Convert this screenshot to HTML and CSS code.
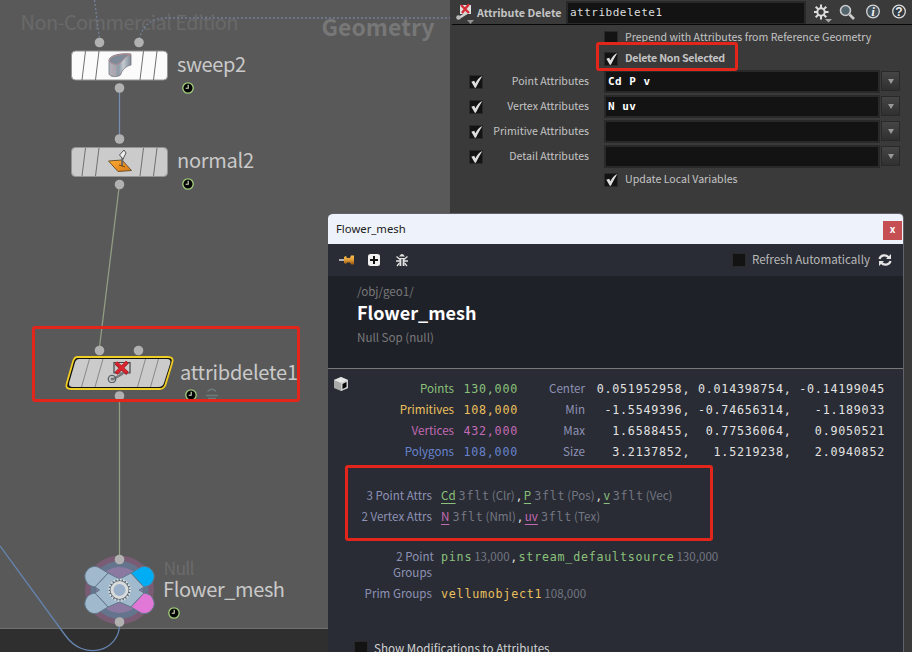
FILE: index.html
```html
<!DOCTYPE html>
<html lang="en">
<head>
<meta charset="utf-8">
<title>Flower_mesh</title>
<link rel="stylesheet" href="styles.css">
</head>
<body>
<svg class="defs" width="0" height="0">
  <defs>
    <linearGradient id="orange" x1="0" y1="0" x2="1" y2="1"><stop offset="0" stop-color="#ffad35"/><stop offset="1" stop-color="#d87813"/></linearGradient>
    <linearGradient id="steel"><stop offset="0" stop-color="#aeb7c0"/><stop offset=".45" stop-color="#8e9ba7"/><stop offset=".65" stop-color="#c3cbd1"/><stop offset="1" stop-color="#7e8a96"/></linearGradient>
    <linearGradient id="gold" x1="0" y1="0" x2="0" y2="1"><stop offset="0" stop-color="#ffc14b"/><stop offset=".5" stop-color="#e09a35"/><stop offset="1" stop-color="#935512"/></linearGradient>
    <symbol id="tick" viewBox="0 0 14 14"><path d="M2.300 6.800 5.200 5.800 6.400 8.300C8 5 10 2.500 13.300 1 11.200 4.500 9.100 8 6.900 12.700H5.800Z" fill="#dedede"/></symbol>
    <symbol id="clock" viewBox="0 0 12 12"><circle cx="6" cy="6" r="5.200" fill="#050505" stroke="#a3cf7b" stroke-width="1.300"/><path d="M6.200 2.800V6.200H3.700" fill="none" stroke="#d8e8ca" stroke-width="1.100"/></symbol>
    <symbol id="attrdel" viewBox="0 0 24 22"><path d="M7 1.500H23V12H7Z" fill="none" stroke="#444" stroke-width="1.200"/><path d="M5.500 18.500 16 12.500" stroke="#777" stroke-width="2.200"/><circle cx="5" cy="18" r="3.700" fill="none" stroke="#59636a" stroke-width="1.300"/><circle cx="5" cy="18" r="1.500" fill="#777"/><path d="M9 2 20.500 12.500M20.500 1 9 12.500" stroke="#8f1820" stroke-width="3.800"/><path d="M9 1.500 20 12M20 1 9.500 12" stroke="#dc2430" stroke-width="2.800"/></symbol>
  </defs>
</svg>
<main class="desktop">
  <section class="network">
    <svg class="canvas" width="450" height="652" viewBox="0 0 450 652">
      <rect y="629" width="450" height="23" fill="#2f2f2f"/>
      <path d="M0 628.500H328" stroke="#6d706d"/>
      <g fill="#696969" class="ui">
        <text x="20.500" y="30" font-size="20" textLength="218">Non-Commercial Edition</text>
        <text x="321.500" y="36" font-size="23" font-weight="700" fill="#777" textLength="113">Geometry</text>
      </g>
      <g fill="none" stroke="#72809a" stroke-width="1.300">
        <path d="M94.500 0 99.500 39M139 39Q145 18 166 18H450" stroke-dasharray="2 2"/>
        <path d="M119.500 92V138" stroke="#7690b2"/>
        <path d="M119 188 99.500 347M119.500 398V556" stroke="#919c83"/>
        <path d="M0 546 65 635C84 662 119 651 119.500 625" stroke="#6583ae"/>
      </g>
      <g class="node">
        <rect x="71.500" y="51" width="96" height="29" rx="4" fill="#fbfbfb" stroke="#939393"/>
        <path d="M85.500 51 82 80M99 51 95.500 80M143.500 51 140 80M157 51 153.500 80" stroke="#707070"/>
        <path d="M109 60C110 54 125 53 131 54V65C126 66 122 70 120.500 75 117 77.500 110 77 109 74Z" fill="url(#steel)" stroke="#77767e" stroke-width=".8"/>
        <path d="M109.500 60C111 55 125 53 131 54.500 122 57 123 64 116 64.500 112 64 109 62 109.500 60Z" fill="#7f8b98" stroke="#b38a92"/>
        <path d="M112 65V75M115 66V76" stroke="#c6a3aa"/>
      </g>
      <g class="node">
        <rect x="71.500" y="147.500" width="96" height="29" rx="4" fill="#cbcbcb" stroke="#949494"/>
        <path d="M85.500 148 82 176M99 148 95.500 176M143.500 148 140 176M157 148 153.500 176" stroke="#707070"/>
        <path d="M108.500 161 122 160 131.500 170.500 118 171.500Z" fill="url(#orange)" stroke="#6f542e"/>
        <path d="M122 166 122.500 157" stroke="#666" stroke-width="2"/><path d="M124 150 126 153 123 159 119.500 155Z" fill="#eee" stroke="#555"/>
        <path d="M119 165 125 167" stroke="#7a480c"/>
      </g>
      <g class="node">
        <path d="M77.500 357H168Q174 357 172.300 362.500L165.500 384.500Q164 389 159.500 389H71Q65 389 66.700 383.500L73 361.500Q74.300 357 77.500 357Z" fill="#111" stroke="#f0cd22" stroke-width="1.800"/>
        <path d="M79 359H167Q171.500 359 170.200 363.500L164 383Q162.800 387 158.500 387H73Q68 387 69.200 382.500L75 362.500Q76 359 79 359Z" fill="#cbcbcb"/>
        <path d="M89.500 359 81.500 387M103 359 95 387M145.500 359 137.500 387M158.500 359 150.500 387" stroke="#888"/>
        <use href="#attrdel" x="107" y="361" width="24" height="22"/>
      </g>
      <g>
        <circle cx="119.500" cy="590" r="34.500" fill="#795c73"/><circle cx="119.500" cy="590" r="29" fill="#65748d"/><circle cx="119.500" cy="590" r="23" fill="#8b79a2"/>
        <g fill="#a0b9cc" stroke="#62788a">
          <path d="M108 573 119.500 579 131 573 144 587 139 590 144 593 131 607 119.500 602 108 607 95 593 99.500 590 95 587Z"/>
          <path d="M108 573 98 567A10 10 0 0 0 86 581Q88 586 95 587Z"/>
          <path d="M108 607 98 613A10 10 0 0 1 86 599Q88 594 95 593Z"/>
          <path d="M131 573 141 567A10 10 0 0 1 153 581Q151 586 144 587Z" fill="#00adf5"/>
          <path d="M131 607 141 613A10 10 0 0 0 153 599Q151 594 144 593Z" fill="#e178d8"/>
        </g>
        <circle cx="119.500" cy="590" r="10.800" fill="#536474"/><circle cx="119.500" cy="590" r="10.500" fill="none" stroke="#d3d9dc" stroke-width="2" stroke-dasharray="2 1.300"/><circle cx="119.500" cy="590" r="7.500" fill="#9ab0cb" stroke="#dadcdb" stroke-width="3"/>
      </g>
      <g fill="#b1b1b1"><circle cx="99.500" cy="42.500" r="4.800"/><circle cx="139" cy="42.500" r="4.800"/><circle cx="119.500" cy="88" r="4.800"/><circle cx="119.500" cy="139" r="4.800"/><circle cx="119.500" cy="184.500" r="4.800"/><circle cx="99.500" cy="350.500" r="4.800"/><circle cx="138.500" cy="350.500" r="4.800"/><circle cx="119.500" cy="396" r="4.800"/><circle cx="119.500" cy="559.500" r="4.800"/><circle cx="119.500" cy="622" r="4.800"/></g>
      <g class="ui" font-size="20" fill="#c9c9c9">
        <text x="177" y="72" textLength="69">sweep2</text>
        <text x="177" y="168" textLength="77">normal2</text>
        <text x="180" y="380" textLength="118">attribdelete1</text>
        <text x="163.500" y="575" font-size="17.500" fill="#6b6b6b" textLength="31">Null</text>
        <text x="163" y="597" textLength="122">Flower_mesh</text>
      </g>
      <use href="#clock" x="182" y="82" width="12" height="12"/><use href="#clock" x="182" y="178" width="12" height="12"/><use href="#clock" x="185" y="389" width="12" height="12"/><use href="#clock" x="168" y="607" width="12" height="12"/>
      <path d="M207.500 391.500Q212 387 216 391.500M206 395.500H218M208 398.500H216" fill="none" stroke="#6c7c7c" stroke-width="1.300"/>
    </svg>
  </section>
  <section class="params">
    <header class="params-head">
      <svg class="op-icon" width="20" height="22" viewBox="0 0 20 22"><path d="M4 1H15V10H4Z" fill="#dedede"/><path d="M3 14 11 9" stroke="#d2d2d2" stroke-width="2.200"/><circle cx="2.500" cy="13.500" r="2.300" fill="#bbb"/><path d="M5 1 13 9M13 0 6 9" stroke="#d32c35" stroke-width="2.400"/><path d="M11 16H18L14.500 20Z" fill="#939393"/></svg>
      <b class="op-name">Attribute Delete</b>
      <span class="name-field">attribdelete1</span>
      <svg class="head-icons" width="98" height="24" viewBox="0 0 98 24" fill="none">
        <g stroke="#ddd"><circle cx="7" cy="12" r="3.700" stroke-width="2"/><path d="M7 4.500V8M7 16V19.500M-.5 12H3M11 12H14.500M1.700 6.700 4.300 9.300M9.700 14.700 12.300 17.300M12.300 6.700 9.700 9.300M4.300 14.700 1.700 17.300" stroke-width="2"/></g>
        <path d="M11 19H18L14.500 22.500Z" fill="#aaa"/>
        <circle cx="31.500" cy="10.500" r="5" fill="#53656d" stroke="#ccc" stroke-width="1.600"/><path d="M35.500 14.500 40 19" stroke="#ccc" stroke-width="2.600"/>
        <circle cx="59" cy="11.500" r="6.300" fill="#43515b" stroke="#d5d5d5" stroke-width="1.300"/><circle cx="85" cy="11.500" r="6.300" fill="#323a40" stroke="#ddd" stroke-width="1.300"/>
        <text class="glyph serif" x="59" y="16" font-size="13">i</text><text class="glyph" x="85" y="16" font-size="12">?</text>
      </svg>
    </header>
    <div class="opt prepend"><i class="box"></i><span>Prepend with Attributes from Reference Geometry</span></div>
    <div class="opt delete"><i class="box"><svg><use href="#tick"/></svg></i><b>Delete Non Selected</b></div>
    <div class="fields">
      <div class="field"><i class="box"><svg><use href="#tick"/></svg></i><label>Point Attributes</label><span class="input">Cd P v</span><span class="drop"></span></div>
      <div class="field"><i class="box"><svg><use href="#tick"/></svg></i><label>Vertex Attributes</label><span class="input">N uv</span><span class="drop"></span></div>
      <div class="field"><i class="box"><svg><use href="#tick"/></svg></i><label>Primitive Attributes</label><span class="input"></span><span class="drop"></span></div>
      <div class="field"><i class="box"><svg><use href="#tick"/></svg></i><label>Detail Attributes</label><span class="input"></span><span class="drop"></span></div>
    </div>
    <div class="opt update"><i class="box"><svg><use href="#tick"/></svg></i><span>Update Local Variables</span></div>
  </section>
  <section class="info">
    <header class="titlebar"><span>Flower_mesh</span><span class="close">x</span></header>
    <div class="toolbar">
      <svg width="74" height="16" viewBox="0 0 74 16"><path d="M0 8H7" stroke="#ddd" stroke-width="1.500"/><path d="M5 5 7 4 8 6H11L12 3.500H15V12.500H12L11 10.500H8L7 12 5 11Z" fill="url(#gold)"/><rect x="29" y="2" width="12" height="12" rx="2.500" fill="#f0f0f0"/><path d="M35 4V12M31 8H39" stroke="#111" stroke-width="2"/>
      <g stroke="#e1e1e1" stroke-width="1.300" fill="none"><path d="M57.500 4.500 60.500 7H65.500L68.500 4.500M57 9H69M58 14 60.500 11M68 14 65.500 11"/><path d="M60.500 6H65.500V14H60.500Z" fill="#e1e1e1" stroke="none"/><path d="M60 4.500Q63 -.5 66 4.500Z" fill="#e1e1e1" stroke="none"/><path d="M63 7V14" stroke="#292c34"/></g></svg>
      <span class="spacer"></span><i class="box"></i><span class="refresh">Refresh Automatically</span>
      <svg width="14" height="14" viewBox="0 0 14 14"><path d="M1.500 6C2.500 2 8 1 11 4.500M12.500 8C11.500 12 6 13 3 9.500" fill="none" stroke="#e5e5e5" stroke-width="2.200"/><path d="M13 1V6H8ZM1 13V8H6Z" fill="#e5e5e5"/></svg>
    </div>
    <div class="identity"><span>/obj/geo1/</span><h1>Flower_mesh</h1><span>Null Sop (null)</span></div>
    <div class="details">
      <svg class="cube" width="14" height="14" viewBox="0 0 14 14"><path d="M0 3 7 0 14 3V11L7 14 0 11Z" fill="#aaa"/><path d="M0 3 7 0 14 3 7 6Z" fill="#e5e5e5"/><path d="M7 6 14 3V11L7 14Z" fill="#cfcfcf"/><path d="M8.500 7 12.500 5V10L8.500 12Z" fill="#050505"/></svg>
      <div class="stats">
        <span class="green">Points</span><code class="green">130,000</code><span>Center</span><code>0.051952958, 0.014398754, -0.14199045</code>
        <span class="yellow">Primitives</span><code class="yellow">108,000</code><span>Min</span><code>-1.5549396, -0.74656314,   -1.189033</code>
        <span class="pink">Vertices</span><code class="pink">432,000</code><span>Max</span><code>1.6588455,  0.77536064,   0.9050521</code>
        <span class="blue">Polygons</span><code class="blue">108,000</code><span>Size</span><code>3.2137852,   1.5219238,   2.0940852</code>
      </div>
      <div class="attrs">
        <span class="key">3 Point Attrs</span><div><u class="green">Cd</u><code>3flt</code><em>(Clr)</em><s>,</s><u class="green">P</u><code>3flt</code><em>(Pos)</em><s>,</s><u class="green">v</u><code>3flt</code><em>(Vec)</em></div>
        <span class="key">2 Vertex Attrs</span><div><u class="pink">N</u><code>3flt</code><em>(Nml)</em><s>,</s><u class="pink">uv</u><code>3flt</code><em>(Tex)</em></div>
      </div>
      <div class="groups">
        <span class="key"><span class="count">2 Point</span><br>Groups</span><div><code class="green">pins</code><em>13,000</em><s>,</s><code class="green">stream_defaultsource</code><em>130,000</em></div>
        <span class="key">Prim Groups</span><div><code class="yellow">vellumobject1</code><em>108,000</em></div>
      </div>
      <div class="mods"><i class="box"></i><span>Show Modifications to Attributes</span></div>
    </div>
  </section>
  <div class="mark mark-option"></div><div class="mark mark-node"></div><div class="mark mark-attrs"></div>
</main>
</body>
</html>
```
FILE: styles.css
```css
* { box-sizing: border-box; }
body { margin: 0; background: #3a3a3a; }
.desktop { position: relative; width: 912px; height: 652px; display: flex; overflow: hidden; font: 11.5px/20px "Noto Sans CJK SC", "Noto Sans", sans-serif; color: #c4c4c4; }
.defs { position: absolute; }
.network { width: 450px; background: #595959; flex: none; }
.canvas { display: block; }
.ui { font-family: "Noto Sans CJK SC", "Noto Sans", sans-serif; }
.node { stroke-width: 1; }
.params { flex: 1; background: #3a3a3a; }
.params-head { display: flex; height: 25px; border-bottom: 1px solid #080808; margin-left: 2px; padding-left: 4px; align-items: center; }
.op-icon { margin-top: 5px; margin-right: 1px; }
.op-name { width: 89px; font-size: 10.8px; white-space: nowrap; }
.name-field { width: 240px; height: 23px; padding-left: 2px; background: #131313; border: 2px solid #292929; border-width: 2px 2px 1px; font: 11px/19px "DejaVu Sans Mono", monospace; letter-spacing: .5px; color: #ddd; }
.head-icons { margin-left: 8px; }
.glyph { fill: #eee; font-family: "Liberation Sans", sans-serif; font-weight: 700; text-anchor: middle; }
.serif { font-family: "Liberation Serif", serif; font-style: italic; }
.box { width: 14px; height: 14px; flex: none; background: #131313; border: 1px solid #292929; display: block; }
.box svg { display: block; width: 14px; height: 14px; margin: -1px; overflow: visible; }
.opt { display: flex; align-items: center; gap: 7px; height: 21px; padding-left: 154px; white-space: nowrap; font-size: 10.6px; }
.opt span, .opt b { padding-bottom: 1px; }
.opt b { letter-spacing: -.25px; }
.prepend { margin-top: 2px; }
.fields { display: grid; gap: 2px; margin-top: 1px; }
.field { display: grid; grid-template-columns: 15px 105px 276px 19px; column-gap: 1px; height: 23px; padding-left: 19px; align-items: center; }
.field label { text-align: right; font-size: 10.6px; white-space: nowrap; margin: 0 1px 2px 0; }
.field .input { margin-left: 13px; width: 276px; }
.field .drop { margin-left: 13px; align-self: start; margin-top: 1px; }
.input { height: 23px; background: #131313; border: 2px solid #292929; padding-left: 2px; color: #fff; font: bold 11px/19px "DejaVu Sans Mono", monospace; letter-spacing: .5px; }
.drop { height: 20px; width: 19px; background: linear-gradient(#454545, #303030); border: 1px solid #292929; display: grid; place-items: center; }
.drop::after { content: ""; border: 3px solid transparent; border-top: 5px solid #999; border-bottom: 0; }
.update { margin-top: 1px; }
.info { position: absolute; left: 328px; top: 213px; width: 576px; height: 450px; border: solid #606268; border-width: 1px 1px 0 0; border-radius: 5px 5px 0 0; overflow: hidden; background: #292c34; font-size: 11.6px; }
.titlebar { height: 30px; background: #eef3fb; color: #202020; display: flex; justify-content: space-between; padding: 5px 1px 0 8px; font: 11.3px/20px "Noto Sans", sans-serif; }
.close { width: 19px; height: 19px; margin-top: 2px; background: #c64f53; color: white; font: bold 10px/16px "Noto Sans CJK SC", sans-serif; text-align: center; }
.toolbar { height: 32px; display: flex; align-items: center; padding: 0 11px 0 11px; color: #b9b9b9; }
.spacer { flex: 1; }
.refresh { margin: 0 8px 2px 6px; }
.identity { height: 93px; background: #1f2129; border-bottom: 1px solid #777; padding: 5px 29px; color: #797979; }
.identity span { display: block; }
h1 { margin: 0; height: 26px; font-size: 18px; line-height: 23px; color: white; }
.details { position: relative; color: #8e92b5; }
.cube { position: absolute; left: 6px; top: 8px; }
code, .details s { font: 11.7px/16px "DejaVu Sans Mono", monospace; letter-spacing: .756px; white-space: pre; }
.stats { display: grid; grid-template-columns: 115px 56px 59px 292px; column-gap: 8px; grid-auto-rows: 21px; align-items: baseline; line-height: 20px; padding: 9px 0 0 11px; text-align: right; }
.stats code:nth-child(4n) { color: #e2e2e2; }
.green { color: #8bc17b; }
.yellow { color: #ecc05f; }
.pink { color: #c36ab5; }
.blue { color: #6883cf; }
.attrs, .groups { display: grid; grid-template-columns: 104px 1fr; column-gap: 9px; line-height: 20px; align-items: baseline; }
.attrs { margin-top: 23px; grid-auto-rows: 21px; }
.groups { margin-top: 21px; row-gap: 5px; line-height: 16px; }
.key { text-align: right; }
.count { margin-right: -2px; }
.groups > div { height: 16px; line-height: 16px; }
.attrs div, .groups div { display: flex; color: #747783; white-space: nowrap; align-items: baseline; }
u { margin-right: 3px; text-underline-offset: 3px; }
em { font-style: normal; margin-left: 2px; }
.details s { text-decoration: none; color: #ddd; width: 9px; text-align: center; }
.mods { display: flex; gap: 6px; padding-left: 26px; margin-top: 37px; line-height: 20px; color: #d2d2d2; align-items: center; }
.mark { position: absolute; border: 3px solid #e3261c; border-radius: 3px; }
.mark-option { left: 596px; top: 42px; width: 142px; height: 29px; }
.mark-node { left: 32px; top: 326px; width: 268px; height: 76px; }
.mark-attrs { left: 345px; top: 465px; width: 368px; height: 76px; }
```
